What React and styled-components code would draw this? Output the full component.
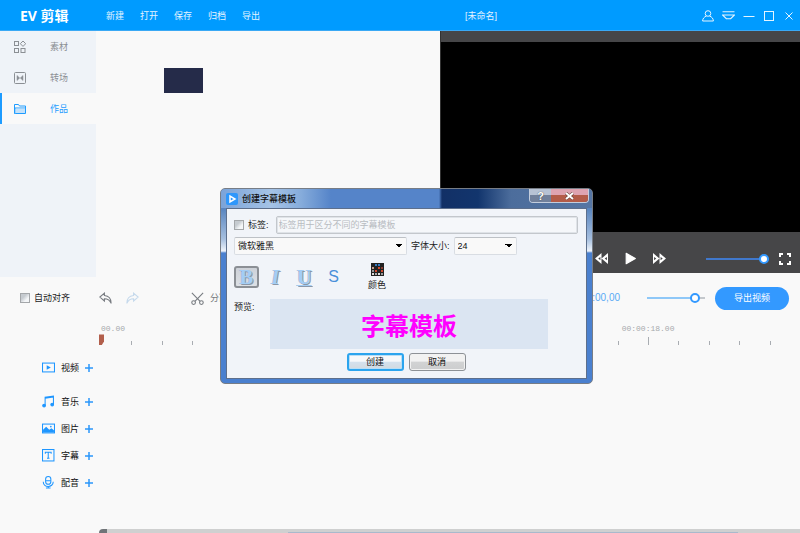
import React, { useState } from "react";
import styled, { createGlobalStyle } from "styled-components";

const GlobalStyle = createGlobalStyle`
    * {
        box-sizing: border-box;
    }

    body {
        margin: 0;
        background: #f9f9f9;
        overflow: hidden;
    }

    body, button, input, select {
        font-family: "Liberation Sans", "Noto Sans CJK SC", sans-serif;
        font-size: 9px;
        line-height: 12px;
    }

    button {
        padding: 0;
        border: 0;
        background: none;
        color: inherit;
    }

    svg {
        display: block;
        flex: none;
    }
`;

const Page = styled.div`
    position: relative;
    display: flex;
    flex-direction: column;
    min-height: 100vh;
    color: #222;
`;

const Header = styled.header`
    display: grid;
    grid-template-columns: 106px 1fr auto 1fr;
    align-items: center;
    height: 31px;
    padding-top: 1px;
    background: #009bff;
    border-bottom: 1px solid #3aa9f5;
    color: #e4f4ff;
`;

const Logo = styled.h1`
    margin: 0;
    padding-left: 20px;
    font-family: "Open Sans", "Noto Sans CJK SC", sans-serif;
    font-size: 14px;
    line-height: 20px;
    font-weight: 700;
    color: #fff;
`;

const Menu = styled.nav`
    display: flex;
    gap: 16px;
`;

const FileName = styled.span`
    padding-left: 56px;
`;

const WindowButtons = styled.div`
    display: flex;
    justify-content: flex-end;
    gap: 8px;
    padding-right: 5px;
`;

const IconButton = styled.button`
    display: flex;
    align-items: center;
    justify-content: center;
`;

const Workspace = styled.div`
    display: grid;
    grid-template-columns: 96px 1fr 45%;
`;

const Sidebar = styled.aside`
    display: flex;
    flex-direction: column;
    margin-bottom: -4px;
    background: #eff3f8;
`;

const SideItem = styled.button`
    display: flex;
    align-items: center;
    gap: 24px;
    height: 31px;
    padding: 1px 0 0 12px;
    border-left: 2px solid ${(props) => (props.$active ? "#1e9cff" : "transparent")};
    background: ${(props) => (props.$active ? "#f9f9f9" : "none")};
    color: ${(props) => (props.$active ? "#1e9cff" : "#8b8f94")};
`;

const Library = styled.main`
    padding: 37px 68px;
`;

const Thumb = styled.div`
    width: 39px;
    height: 25px;
    background: #252b49;
`;

const Player = styled.section`
    padding-top: 11px;
    border-left: 1px solid #333;
    background: #464648;
`;

const Screen = styled.div`
    aspect-ratio: 360 / 191;
    background: #000;
`;

const PlayerControls = styled.div`
    display: flex;
    align-items: center;
    justify-content: flex-end;
    gap: 16px;
    height: 41px;
    padding: 12px 9px 0 0;
    color: #fff;
`;

const Range = styled.input`
    appearance: none;
    width: ${(props) => props.$width};
    height: 14px;
    margin: 0;
    background: linear-gradient(
            to right,
            ${(props) => props.$track} ${(props) => props.value}%,
            #c4c8cc ${(props) => props.value}%
        )
        center / 100% 2px no-repeat;

    &::-webkit-slider-thumb {
        appearance: none;
        width: 10px;
        height: 10px;
        border: 2px solid #3399ff;
        border-radius: 50%;
        background: #fff;
    }
`;

const VolumeRange = styled(Range)`
    margin: 0 -6px 0 24px;
`;

const Toolbar = styled.div`
    display: flex;
    align-items: center;
    height: 50px;
    padding: 0 11px 0 20px;
`;

const CheckLabel = styled.label`
    display: flex;
    align-items: center;
    gap: 4px;
`;

const Checkbox = styled.input`
    appearance: none;
    width: 10px;
    height: 10px;
    margin: 0;
    border: 1px solid #a4a7aa;
    background: linear-gradient(135deg, #c6cbd0 35%, #f4f6f8 70%);
`;

const EditTools = styled.div`
    display: flex;
    align-items: center;
    gap: 14px;
    flex: 1;
    padding-left: 29px;
    color: #777b80;
`;

const SplitButton = styled(IconButton)`
    gap: 6px;
    margin-left: 38px;
`;

const Time = styled.span`
    padding-right: 27px;
    font-size: 10px;
    color: #5aabf5;
`;

const ExportButton = styled.button`
    width: 74px;
    height: 23px;
    margin-left: 10px;
    border-radius: 12px;
    background: #3399ff;
    color: #fff;
`;

const RulerWrap = styled.div`
    position: relative;
`;

const Ruler = styled.div`
    display: flex;
    align-items: flex-end;
    height: 22px;
    margin-left: 101px;
`;

const Tick = styled.div`
    position: relative;
    flex: 1;
    height: ${(props) => (props.$major ? "22px" : "4px")};
    background: linear-gradient(#a9adb2, #a9adb2) left bottom / 1px
        ${(props) => (props.$major ? "8px" : "4px")} no-repeat;
`;

const TickLabel = styled.span`
    position: absolute;
    top: 0;
    left: 0;
    transform: ${(props) => (props.$first ? "none" : "translateX(-50%)")};
    font-family: "Liberation Mono", monospace;
    font-size: 8px;
    color: #a6a9ad;
`;

const Playhead = styled.span`
    position: absolute;
    left: 99px;
    bottom: 0;
    width: 5px;
    height: 11px;
    background: #b25f4c;
    clip-path: polygon(0 0, 100% 0, 100% 65%, 50% 100%, 0 100%);
`;

const Tracks = styled.ul`
    flex: 1;
    margin: 0;
    padding: 9px 0 0 42px;
    list-style: none;
`;

const Track = styled.li`
    display: flex;
    align-items: center;
    gap: 6px;
    height: 27px;
    color: #111;

    &:first-child {
        margin-bottom: 7px;
    }
`;

const TrackName = styled.span`
    width: 18px;
`;

const ScrollBar = styled.div`
    display: flex;
    align-items: flex-end;
    height: 4px;
    margin-left: 99px;
    padding: 0 62px 0 189px;
    border-top-left-radius: 4px;
    background: linear-gradient(to right, #707478 8px, #cfd0d0 8px);
`;

const ScrollThumb = styled.div`
    flex: 1;
    height: 1px;
    background: #a9b9cc;
`;

const Dialog = styled.section`
    position: absolute;
    top: 188px;
    left: calc(50% - 180px);
    width: 373px;
    padding: 0 5px 4px;
    border: 1px solid #777d86;
    border-radius: 5px;
    background: linear-gradient(#5a86c0 20px, #a6bfdf 50px, #eef3fa 62px, #4a80cf 64px, #4a80cf);
    color: #222;
`;

const TitleBar = styled.div`
    display: flex;
    align-items: center;
    gap: 4px;
    height: 19px;
    margin: 0 -5px;
    padding-left: 5px;
    border-radius: 4px 4px 0 0;
    background: linear-gradient(
        to right,
        #7ba3d8,
        #a5c3e6 50px,
        #86acdb 80px,
        #5584c9 110px,
        #5584c9 218px,
        #123066 221px,
        #12356d 257px,
        #4c6d9c 290px,
        #5676a4
    );
`;

const DialogTitle = styled.h2`
    flex: 1;
    margin: 0;
    font-size: 9px;
    font-weight: 500;
    color: #111;
`;

const CaptionButtons = styled.div`
    display: flex;
    align-self: flex-start;
    margin-right: 3px;
    border: 1px solid #c3cddd;
    border-top: 0;
    border-radius: 0 0 4px 4px;
    overflow: hidden;
`;

const CaptionButton = styled.button`
    display: flex;
    align-items: center;
    justify-content: center;
    width: ${(props) => (props.$close ? "37px" : "21px")};
    height: 13px;
    font-size: 11px;
    font-weight: 700;
    color: #fff;
    text-shadow: 0 0 1px #222;
    background: ${(props) =>
        props.$close
            ? "linear-gradient(#dea3b0 45%, #b35b48 50%)"
            : "linear-gradient(#b7c2d4 45%, #71809b 50%)"};
`;

const Form = styled.form`
    display: flex;
    flex-direction: column;
    padding: 7px 8px 7px 7px;
    border: 1px solid #5d6f8c;
    background: #f1f4f9;
`;

const Row = styled.div`
    display: flex;
    align-items: center;
    gap: 4px;
`;

const TagInput = styled.input`
    flex: 1;
    min-width: 0;
    height: 18px;
    margin-left: 3px;
    padding: 0 2px;
    border: 1px solid #c3c7cc;
    border-radius: 2px;
    background: #f5f7fa;
    box-shadow: inset 0 0 0 1px #dfe3e8;

    &::placeholder {
        color: #b8bcc1;
    }
`;

const SelectRow = styled(Row)`
    margin-top: 3px;
`;

const Select = styled.select`
    appearance: none;
    width: ${(props) => props.$width};
    height: 18px;
    padding: 0 3px;
    border: 1px solid #d9dde3;
    border-top-color: #bdc1c6;
    border-radius: 2px;
    color: #111;
    background:
        linear-gradient(to bottom right, #000 50%, transparent 50%) right 3px center / 4px 4px no-repeat,
        linear-gradient(to bottom left, #000 50%, transparent 50%) right 7px center / 4px 4px no-repeat,
        #f9f9f9;
`;

const StyleRow = styled(Row)`
    margin-top: 6px;
    height: 31px;
`;

const StyleButton = styled.button`
    width: 25px;
    height: 22px;
    border: 2px solid ${(props) => (props.$pressed ? "#8b8f95" : "transparent")};
    border-radius: 3px;
    background: ${(props) => (props.$pressed ? "linear-gradient(#cdd1d8, #dde1e6)" : "none")};
    font-family: "Liberation Serif", serif;
    font-size: 20px;
    line-height: 18px;
    font-weight: 700;
    color: #a3cdf5;
    text-shadow: 1px 1px 0 #8a97a8, -1px 0 0 #a9bdd4;
    font-style: ${(props) => (props.$italic ? "italic" : "normal")};
    text-decoration: ${(props) => (props.$underline ? "underline" : "none")};
    text-decoration-thickness: 1px;
`;

const StrikeButton = styled(StyleButton)`
    font-family: "Liberation Sans", sans-serif;
    font-size: 16px;
    font-weight: 400;
    color: #4a90d9;
    text-shadow: none;
`;

const ColorButton = styled.button`
    display: flex;
    flex-direction: column;
    align-items: center;
    gap: 3px;
    margin-left: 18px;
`;

const PreviewRow = styled.div`
    display: flex;
    gap: 15px;
    margin-top: 7px;
    padding-right: 30px;
`;

const PreviewLabel = styled.span`
    width: 21px;
    padding-top: 2px;
`;

const Preview = styled.output`
    flex: 1;
    display: flex;
    align-items: center;
    justify-content: center;
    height: 50px;
    padding-top: 2px;
    background: #dbe5f2;
    font-family: "Noto Sans CJK SC", sans-serif;
    font-size: 24px;
    line-height: 32px;
    font-weight: 700;
    color: #ff00ff;
`;

const Actions = styled.div`
    display: flex;
    justify-content: center;
    gap: 5px;
    margin-top: 4px;
`;

const ActionButton = styled.button`
    width: 57px;
    height: 18px;
    border: ${(props) => (props.$primary ? "2px solid #2ba4ee" : "1px solid #8d9196")};
    border-radius: 3px;
    background: ${(props) =>
        props.$primary
            ? "linear-gradient(#f6f8fa 45%, #d3e1ee 50%, #d3dae0)"
            : "linear-gradient(#f2f2f2 45%, #d2d3d4 50%, #cccdce)"};
    box-shadow: inset 0 0 0 1px ${(props) => (props.$primary ? "#b8def6" : "#f2f2f2")};
    color: #111;
`;

function Icon({ size = 12, stroke = 1, children }) {
    return (
        <svg
            width={size}
            height={size}
            viewBox="0 0 12 12"
            fill="none"
            stroke="currentColor"
            strokeWidth={stroke}
        >
            {children}
        </svg>
    );
}

const sideItems = [
    {
        name: "素材",
        icon: (
            <>
                <rect x="0.5" y="0.5" width="4" height="4" />
                <path d="M9 0l2.7 2.7L9 5.4 6.3 2.7z" />
                <rect x="0.5" y="7.5" width="4" height="4" />
                <rect x="7" y="7.5" width="4" height="4" />
            </>
        ),
    },
    {
        name: "转场",
        icon: (
            <>
                <rect x="0.5" y="0.5" width="11" height="11" rx="1" />
                <path d="M3 3.5v5L5.7 6zM9 3.5v5L6.3 6z" fill="currentColor" strokeWidth="0.5" />
            </>
        ),
    },
    {
        name: "作品",
        icon: (
            <>
                <path d="M0.5 10.5v-9h4l1 1.5h6v7.5z" />
                <path d="M1 10.5V5h10.5" fill="#c4e2fb" />
                <path d="M1.5 5.5H11V10H1.5z" fill="#c4e2fb" stroke="none" />
            </>
        ),
    },
];

const tracks = [
    {
        name: "视频",
        icon: (
            <>
                <rect x="0.5" y="2" width="11.5" height="8.5" />
                <path d="M4.5 4v4.5L8.5 6.2z" fill="currentColor" stroke="none" />
            </>
        ),
    },
    {
        name: "音乐",
        icon: (
            <>
                <path d="M3 10V2.2L11 1v8M3 3.2L11 2" />
                <circle cx="2" cy="10.2" r="1.3" fill="currentColor" />
                <circle cx="9.8" cy="9.2" r="1.3" fill="currentColor" />
            </>
        ),
    },
    {
        name: "图片",
        icon: (
            <>
                <rect x="0.5" y="2" width="11.5" height="8.5" />
                <path d="M1 10V7.5l3-3 3 3 2-1.5 2.5 2V10z" fill="currentColor" stroke="none" />
                <circle cx="8.5" cy="4.5" r="0.8" fill="currentColor" stroke="none" />
            </>
        ),
    },
    {
        name: "字幕",
        icon: (
            <>
                <rect x="0.5" y="0.5" width="11" height="11" />
                <path d="M3.2 4.5V3.2h5.6v1.3M6 3.2v5.6M4.8 8.8h2.4" />
            </>
        ),
    },
    {
        name: "配音",
        icon: (
            <>
                <rect x="3.5" y="0.5" width="5" height="7.5" rx="2.5" />
                <path d="M3.5 4.5h5M1.2 5.5c0 6 9.6 6 9.6 0M6 10v1.5M3.8 11.5h4.4" />
            </>
        ),
    },
];

const ticks = Array.from({ length: 23 }, (_, i) => i);
const tickLabels = { 0: "00.00", 18: "00:00:18.00" };

const swatches = [
    "#222", "#3478c0", "#3478c0", "#222",
    "#c89a8a", "#222", "#d0472c", "#8a3c30",
    "#999", "#d0472c", "#222", "#d0472c",
    "#ddd", "#aaa", "#ddd", "#999",
];

function SubtitleDialog({ onClose }) {
    const [tag, setTag] = useState("");
    const [bold, setBold] = useState(true);

    return (
        <Dialog role="dialog" aria-labelledby="dialog-title">
            <TitleBar>
                <svg width="12" height="12" viewBox="0 0 12 12">
                    <rect width="12" height="12" rx="2" fill="#2e97fb" />
                    <path d="M4 3v6l5-3z" fill="none" stroke="#fff" strokeWidth="1.5" />
                </svg>
                <DialogTitle id="dialog-title">创建字幕模板</DialogTitle>
                <CaptionButtons>
                    <CaptionButton type="button" aria-label="帮助">?</CaptionButton>
                    <CaptionButton type="button" $close aria-label="关闭" onClick={onClose}>
                        <svg width="9" height="8" viewBox="0 0 9 8" fill="none">
                            <path d="M1 1l7 6M8 1L1 7" stroke="#69453f" strokeWidth="3" />
                            <path d="M1 1l7 6M8 1L1 7" stroke="#fff" strokeWidth="2" />
                        </svg>
                    </CaptionButton>
                </CaptionButtons>
            </TitleBar>
            <Form onSubmit={(e) => e.preventDefault()}>
                <Row>
                    <CheckLabel>
                        <Checkbox type="checkbox" />
                        标签:
                    </CheckLabel>
                    <TagInput
                        aria-label="标签"
                        placeholder="标签用于区分不同的字幕模板"
                        value={tag}
                        onChange={(e) => setTag(e.target.value)}
                    />
                </Row>
                <SelectRow>
                    <Select $width="173px" aria-label="字体">
                        <option>微软雅黑</option>
                    </Select>
                    <label htmlFor="font-size">字体大小:</label>
                    <Select $width="63px" id="font-size">
                        <option>24</option>
                    </Select>
                </SelectRow>
                <StyleRow>
                    <StyleButton type="button" $pressed={bold} onClick={() => setBold(!bold)}>
                        B
                    </StyleButton>
                    <StyleButton type="button" $italic>I</StyleButton>
                    <StyleButton type="button" $underline>U</StyleButton>
                    <StrikeButton type="button">S</StrikeButton>
                    <ColorButton type="button">
                        <svg width="13" height="13" viewBox="0 0 13 13">
                            <rect width="13" height="13" fill="#222" />
                            {swatches.map((color, i) => (
                                <rect
                                    key={i}
                                    x={1 + (i % 4) * 3}
                                    y={1 + Math.floor(i / 4) * 3}
                                    width="2"
                                    height="2"
                                    fill={color}
                                />
                            ))}
                        </svg>
                        颜色
                    </ColorButton>
                </StyleRow>
                <PreviewRow>
                    <PreviewLabel>预览:</PreviewLabel>
                    <Preview>字幕模板</Preview>
                </PreviewRow>
                <Actions>
                    <ActionButton type="submit" $primary>创建</ActionButton>
                    <ActionButton type="button" onClick={onClose}>取消</ActionButton>
                </Actions>
            </Form>
        </Dialog>
    );
}

function App() {
    const [active, setActive] = useState("作品");
    const [volume, setVolume] = useState(100);
    const [zoom, setZoom] = useState(90);
    const [open, setOpen] = useState(true);

    return (
        <Page>
            <GlobalStyle />
            <Header>
                <Logo>EV 剪辑</Logo>
                <Menu>
                    {["新建", "打开", "保存", "归档", "导出"].map((item) => (
                        <button key={item}>{item}</button>
                    ))}
                </Menu>
                <FileName>[未命名]</FileName>
                <WindowButtons>
                    <IconButton aria-label="用户">
                        <Icon>
                            <circle cx="6" cy="3.5" r="2.8" />
                            <path d="M4.5 6C2 7 0.8 8.5 0.6 11h10.8C11.2 8.5 10 7 7.5 6" />
                        </Icon>
                    </IconButton>
                    <IconButton aria-label="菜单">
                        <Icon size={13}>
                            <path d="M0.5 2.5h11M0.5 5.5h11L8 9H4z" />
                        </Icon>
                    </IconButton>
                    <IconButton aria-label="最小化">
                        <Icon>
                            <path d="M0.5 6.5h11" />
                        </Icon>
                    </IconButton>
                    <IconButton aria-label="最大化">
                        <Icon>
                            <rect x="1.5" y="1.5" width="9" height="9" />
                        </Icon>
                    </IconButton>
                    <IconButton aria-label="关闭">
                        <Icon>
                            <path d="M2.5 2.5l7 7M9.5 2.5l-7 7" />
                        </Icon>
                    </IconButton>
                </WindowButtons>
            </Header>

            <Workspace>
                <Sidebar>
                    {sideItems.map((item) => (
                        <SideItem
                            key={item.name}
                            $active={item.name === active}
                            onClick={() => setActive(item.name)}
                        >
                            <Icon>{item.icon}</Icon>
                            {item.name}
                        </SideItem>
                    ))}
                </Sidebar>
                <Library>
                    <Thumb />
                </Library>
                <Player>
                    <Screen />
                    <PlayerControls>
                        <IconButton aria-label="后退">
                            <Icon size={13}>
                                <path d="M6 1v10L0 6zM12 1v10L6 6z" fill="currentColor" stroke="none" />
                                <path d="M5 4.5v3L3 6zM11 4.5v3L9 6z" fill="#464648" stroke="none" />
                            </Icon>
                        </IconButton>
                        <IconButton aria-label="播放">
                            <Icon size={13}>
                                <path d="M2 1.2v9.6L10.5 6z" fill="currentColor" strokeLinejoin="round" />
                            </Icon>
                        </IconButton>
                        <IconButton aria-label="前进">
                            <Icon size={13}>
                                <path d="M0 1v10l6-5zM6 1v10l6-5z" fill="currentColor" stroke="none" />
                                <path d="M1 4.5v3L3 6zM7 4.5v3L9 6z" fill="#464648" stroke="none" />
                            </Icon>
                        </IconButton>
                        <VolumeRange
                            type="range"
                            aria-label="音量"
                            $width="63px"
                            $track="#4078cc"
                            value={volume}
                            onChange={(e) => setVolume(e.target.value)}
                        />
                        <IconButton aria-label="全屏">
                            <Icon stroke={2}>
                                <path d="M1 4V1h3M8 1h3v3M11 8v3H8M4 11H1V8" />
                            </Icon>
                        </IconButton>
                    </PlayerControls>
                </Player>
            </Workspace>

            <Toolbar>
                <CheckLabel>
                    <Checkbox type="checkbox" />
                    自动对齐
                </CheckLabel>
                <EditTools>
                    <IconButton aria-label="撤销">
                        <Icon size={13}>
                            <path d="M5 1L0.8 4.7 5 8.3V6.2c3 0 5 1.2 6.2 4.3C11.2 6 9 3.5 5 3.2z" />
                        </Icon>
                    </IconButton>
                    <IconButton aria-label="重做" disabled>
                        <svg width="13" height="13" viewBox="0 0 12 12" fill="none" stroke="#c5d9ec">
                            <path d="M7 1l4.2 3.7L7 8.3V6.2c-3 0-5 1.2-6.2 4.3C0.8 6 3 3.5 7 3.2z" />
                        </svg>
                    </IconButton>
                    <SplitButton>
                        <Icon size={13}>
                            <path d="M0.8 0.8l7.6 7.8M11.2 0.8L3.6 8.6" />
                            <circle cx="2.4" cy="9.8" r="1.7" />
                            <circle cx="9.6" cy="9.8" r="1.7" />
                        </Icon>
                        分割
                    </SplitButton>
                </EditTools>
                <Time>00:00:00,00</Time>
                <Range
                    type="range"
                    aria-label="缩放"
                    $width="58px"
                    $track="#8fc8f8"
                    value={zoom}
                    onChange={(e) => setZoom(e.target.value)}
                />
                <ExportButton>导出视频</ExportButton>
            </Toolbar>

            <RulerWrap>
                <Ruler>
                    {ticks.map((i) => (
                        <Tick key={i} $major={i in tickLabels}>
                            {i in tickLabels && (
                                <TickLabel $first={i === 0}>{tickLabels[i]}</TickLabel>
                            )}
                        </Tick>
                    ))}
                </Ruler>
                <Playhead />
            </RulerWrap>

            <Tracks>
                {tracks.map((track) => (
                    <Track key={track.name}>
                        <svg
                            width="13"
                            height="13"
                            viewBox="0 0 12.5 12.5"
                            fill="none"
                            stroke="#1e96ff"
                            color="#1e96ff"
                        >
                            {track.icon}
                        </svg>
                        <TrackName>{track.name}</TrackName>
                        <IconButton aria-label={"添加" + track.name}>
                            <svg width="8" height="8" viewBox="0 0 8 8" stroke="#2b97fa" strokeWidth="1.5">
                                <path d="M4 0v8M0 4h8" />
                            </svg>
                        </IconButton>
                    </Track>
                ))}
            </Tracks>

            <ScrollBar>
                <ScrollThumb />
            </ScrollBar>

            {open && <SubtitleDialog onClose={() => setOpen(false)} />}
        </Page>
    );
}

export default App;
